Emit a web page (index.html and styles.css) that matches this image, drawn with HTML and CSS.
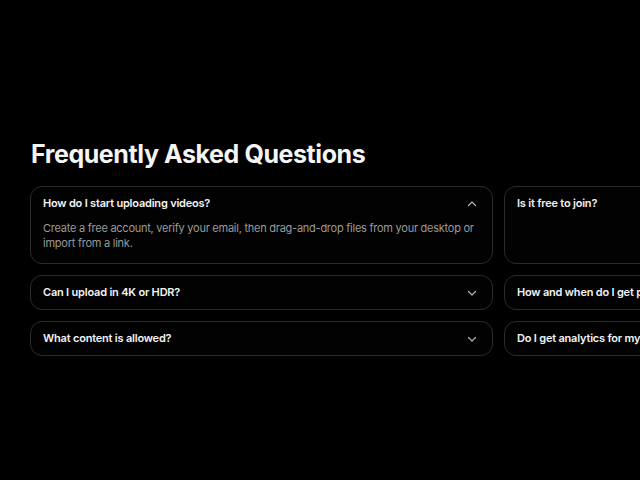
FILE: index.html
```html
<!DOCTYPE html>
<html lang="en">
<head>
<meta charset="utf-8">
<title>FAQ</title>
<link rel="stylesheet" href="styles.css">
</head>
<body>
<section class="faq">
  <h2 class="faq-title">Frequently Asked Questions</h2>
  <div class="faq-grid">
    <div class="faq-item open">
      <div class="faq-q"><span>How do I start uploading videos?</span>
        <svg class="chev" viewBox="0 0 12 12" width="12" height="12"><path d="M2.5 7.5 L6 4 L9.5 7.5"/></svg>
      </div>
      <p class="faq-a">Create a free account, verify your email, then drag-and-drop files from your desktop or import from a link.</p>
    </div>
    <div class="faq-item">
      <div class="faq-q"><span>Is it free to join?</span>
        <svg class="chev" viewBox="0 0 12 12" width="12" height="12"><path d="M2.5 4.5 L6 8 L9.5 4.5"/></svg>
      </div>
    </div>
    <div class="faq-item">
      <div class="faq-q"><span>Can I upload in 4K or HDR?</span>
        <svg class="chev" viewBox="0 0 12 12" width="12" height="12"><path d="M2.5 4.5 L6 8 L9.5 4.5"/></svg>
      </div>
    </div>
    <div class="faq-item">
      <div class="faq-q"><span>How and when do I get paid?</span>
        <svg class="chev" viewBox="0 0 12 12" width="12" height="12"><path d="M2.5 4.5 L6 8 L9.5 4.5"/></svg>
      </div>
    </div>
    <div class="faq-item">
      <div class="faq-q"><span>What content is allowed?</span>
        <svg class="chev" viewBox="0 0 12 12" width="12" height="12"><path d="M2.5 4.5 L6 8 L9.5 4.5"/></svg>
      </div>
    </div>
    <div class="faq-item">
      <div class="faq-q"><span>Do I get analytics for my videos?</span>
        <svg class="chev" viewBox="0 0 12 12" width="12" height="12"><path d="M2.5 4.5 L6 8 L9.5 4.5"/></svg>
      </div>
    </div>
  </div>
</section>
</body>
</html>
```
FILE: styles.css
```css
html, body {
  margin: 0;
  padding: 0;
  background: #000;
  overflow: hidden;
}
body {
  font-family: Inter, "Liberation Sans", sans-serif;
  color: #f2f2f2;
  width: 640px;
  height: 480px;
}
.faq {
  padding: 138px 0 0 30px;
}
.faq-title {
  margin: 0 0 0 1px;
  font-size: 25px;
  line-height: 32px;
  font-weight: 700;
  letter-spacing: -0.42px;
  color: #f5f5f5;
}
.faq-grid {
  margin-top: 16px;
  display: grid;
  grid-template-columns: 463px 463px;
  column-gap: 11px;
  row-gap: 11px;
  width: 937px;
}
.faq-item {
  border: 1px solid #2b2b2b;
  border-radius: 12px;
  padding: 9px 14px 12px 12px;
  background: #020202;
}
.faq-item:not(.open) {
  padding-bottom: 9px;
}
.faq-q {
  display: flex;
  justify-content: space-between;
  align-items: center;
  font-size: 11px;
  line-height: 15px;
  font-weight: 600;
  letter-spacing: -0.2px;
  color: #f2f2f2;
}
.chev {
  fill: none;
  stroke: #b0b0b0;
  stroke-width: 1.2;
  stroke-linecap: round;
  stroke-linejoin: round;
}
.faq-a {
  margin: 10px 0 0 0;
  font-size: 11px;
  line-height: 15px;
  color: #9a9a9a;
  letter-spacing: -0.25px;
}
```
